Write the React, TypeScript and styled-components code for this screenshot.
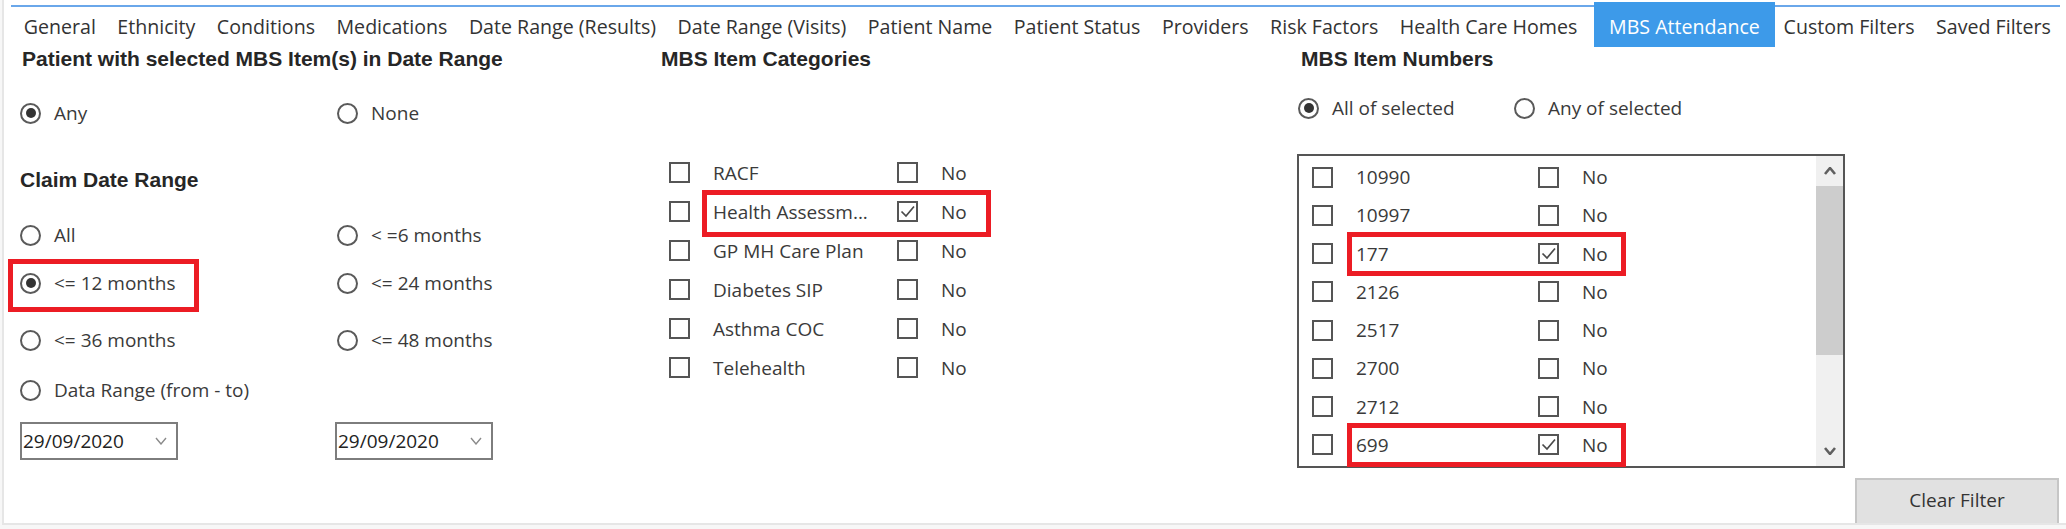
import React from 'react';
import styled, { createGlobalStyle } from 'styled-components';

const GlobalStyle = createGlobalStyle`
  html, body { margin: 0; padding: 0; background: #ffffff; }
  body { font-family: "Open Sans", "Noto Sans", sans-serif; color: #3a3a3a; }
  *, *::before, *::after { box-sizing: border-box; }
`;

const Page = styled.div`
  width: 2066px;
  height: 529px;
  overflow: hidden;
  background: #f7f7f7;
`;

const Panel = styled.div`
  margin-left: 2px;
  width: 2064px;
  height: 525px;
  background: #ffffff;
  border-left: 2px solid #e6e6e6;
  border-bottom: 2px solid #e6e6e6;
  overflow: hidden;
  display: flex;
  flex-direction: column;
`;

const TabStrip = styled.div`
  margin: 5px 6px 0 7px;
  border-top: 2px solid #6aa7ea;
  height: 42px;
  display: flex;
  padding-left: 2px;
`;

const Tab = styled.div<{ $active?: boolean }>`
  height: ${(p) => (p.$active ? 45 : 40)}px;
  margin-top: ${(p) => (p.$active ? -5 : 0)}px;
  padding: ${(p) => (p.$active ? '5px 15px 0 15px' : '0 10.75px')};
  margin-left: ${(p) => (p.$active ? 6 : 0)}px;
  margin-right: ${(p) => (p.$active ? -2 : 0)}px;
  line-height: 40px;
  font-size: 19.6px;
  white-space: nowrap;
  color: ${(p) => (p.$active ? '#ffffff' : '#333333')};
  background: ${(p) => (p.$active ? '#3d9ae9' : 'transparent')};
`;

const Content = styled.div`
  flex: 1;
  display: flex;
  padding-left: 16px;
`;

const Column = styled.div<{ $width?: number }>`
  display: flex;
  flex-direction: column;
  ${(p) => (p.$width ? `width: ${p.$width}px;` : 'flex: 1; padding-right: 5px;')}
`;

const Heading = styled.div<{ $indent?: number; $mt?: number }>`
  font-family: "Liberation Sans", Arial, sans-serif;
  font-weight: bold;
  font-size: 21px;
  line-height: 24px;
  height: 24px;
  color: #262626;
  margin-left: ${(p) => p.$indent ?? 0}px;
  margin-top: ${(p) => p.$mt ?? 0}px;
  white-space: nowrap;
`;

const OptionRow = styled.div<{ $mt: number; $col: number; $indent?: number }>`
  display: grid;
  grid-template-columns: ${(p) => p.$col}px auto;
  align-items: center;
  height: 24px;
  margin-top: ${(p) => p.$mt}px;
  padding-left: ${(p) => p.$indent ?? 0}px;
`;

const Option = styled.label<{ $hl?: boolean }>`
  position: relative;
  display: inline-flex;
  align-items: center;
  gap: 13px;
  font-size: 19px;
  line-height: 24px;
  color: #3a3a3a;
  white-space: nowrap;
  justify-self: start;
  &::after {
    content: '';
    display: ${(p) => (p.$hl ? 'block' : 'none')};
    position: absolute;
    left: -12px;
    right: -24px;
    top: -12px;
    bottom: -17px;
    border: 5px solid #ec1c24;
    pointer-events: none;
  }
`;

const RadioCircle = styled.span<{ $checked?: boolean }>`
  width: 21px;
  height: 21px;
  border-radius: 50%;
  border: 2px solid #5a5a5a;
  background: #ffffff;
  display: grid;
  place-items: center;
  flex-shrink: 0;
  &::after {
    content: '';
    display: ${(p) => (p.$checked ? 'block' : 'none')};
    width: 10px;
    height: 10px;
    border-radius: 50%;
    background: #333333;
  }
`;

const PickerRow = styled.div`
  display: grid;
  grid-template-columns: 315px auto;
  margin-top: 20px;
`;

const DatePicker = styled.div`
  width: 158px;
  height: 38px;
  border: 2px solid #7d7d7d;
  display: flex;
  align-items: center;
  justify-content: space-between;
  padding: 0 9px 0 1px;
  font-size: 19px;
  color: #222222;
  background: #ffffff;
`;

const CheckList = styled.div<{ $mt: number }>`
  display: flex;
  flex-direction: column;
  margin-top: ${(p) => p.$mt}px;
`;

const CheckRow = styled.div<{ $h: number; $pl: number }>`
  display: flex;
  align-items: center;
  height: ${(p) => p.$h}px;
  padding-left: ${(p) => p.$pl}px;
`;

const Box = styled.span`
  width: 21px;
  height: 21px;
  border: 2px solid #555555;
  background: #ffffff;
  flex-shrink: 0;
  display: grid;
  place-items: center;
  margin-right: 23px;
`;

const Pair = styled.div<{ $hl?: boolean; $l: number; $r: number; $t: number; $b: number }>`
  position: relative;
  display: flex;
  align-items: center;
  height: 100%;
  &::after {
    content: '';
    display: ${(p) => (p.$hl ? 'block' : 'none')};
    position: absolute;
    left: ${(p) => p.$l}px;
    right: ${(p) => p.$r}px;
    top: ${(p) => p.$t}px;
    bottom: ${(p) => p.$b}px;
    border: 5px solid #ec1c24;
    pointer-events: none;
  }
`;

const ItemText = styled.span<{ $w: number }>`
  width: ${(p) => p.$w}px;
  font-size: 19px;
  line-height: 24px;
  color: #3a3a3a;
  white-space: nowrap;
`;

const NoText = styled.span`
  font-size: 19px;
  line-height: 24px;
  color: #3a3a3a;
`;

const ListBox = styled.div`
  margin-top: 34px;
  width: 548px;
  height: 314px;
  border: 2px solid #555555;
  display: flex;
  background: #ffffff;
`;

const ListRows = styled.div`
  flex: 1;
  padding-top: 2px;
  display: flex;
  flex-direction: column;
`;

const ScrollBar = styled.div`
  width: 27px;
  background: #f0f0f0;
  display: flex;
  flex-direction: column;
`;

const ScrollArrow = styled.div<{ $h: number }>`
  height: ${(p) => p.$h}px;
  display: grid;
  place-items: center;
`;

const ScrollThumb = styled.div`
  height: 169px;
  background: #cdcdcd;
`;

const ScrollTrack = styled.div`
  flex: 1;
`;

const ClearButton = styled.button`
  align-self: flex-end;
  margin-top: 10px;
  margin-right: 2px;
  width: 204px;
  height: 46px;
  background: #e1e1e1;
  border: 2px solid #c6c6c6;
  border-bottom: none;
  font-family: "Open Sans", "Noto Sans", sans-serif;
  font-size: 19px;
  color: #333333;
  padding: 0 0 4px 0;
`;

const Check = () => (
  <svg width="17" height="17" viewBox="0 0 17 17">
    <polyline points="2.5,8.5 7,13 15,3.5" fill="none" stroke="#4a4a4a" strokeWidth="1.7" />
  </svg>
);

const Chevron = ({ up, color = '#8a8a8a', w = 12, sw = 1.4 }: { up?: boolean; color?: string; w?: number; sw?: number }) => (
  <svg width={w} height={w / 2 + 2} viewBox={`0 0 ${w} ${w / 2 + 2}`}>
    <polyline
      points={up ? `1,${w / 2 + 1} ${w / 2},1 ${w - 1},${w / 2 + 1}` : `1,1 ${w / 2},${w / 2 + 1} ${w - 1},1`}
      fill="none"
      stroke={color}
      strokeWidth={sw}
    />
  </svg>
);

const tabs = [
  'General',
  'Ethnicity',
  'Conditions',
  'Medications',
  'Date Range (Results)',
  'Date Range (Visits)',
  'Patient Name',
  'Patient Status',
  'Providers',
  'Risk Factors',
  'Health Care Homes',
  'MBS Attendance',
  'Custom Filters',
  'Saved Filters',
];

const categories = [
  { name: 'RACF', checked: false },
  { name: 'Health Assessm...', checked: true },
  { name: 'GP MH Care Plan', checked: false },
  { name: 'Diabetes SIP', checked: false },
  { name: 'Asthma COC', checked: false },
  { name: 'Telehealth', checked: false },
];

const numbers = [
  { n: '10990', checked: false },
  { n: '10997', checked: false },
  { n: '177', checked: true },
  { n: '2126', checked: false },
  { n: '2517', checked: false },
  { n: '2700', checked: false },
  { n: '2712', checked: false },
  { n: '699', checked: true },
];

const Radio = ({ label, checked, hl }: { label: string; checked?: boolean; hl?: boolean }) => (
  <Option $hl={hl}>
    <RadioCircle $checked={checked} />
    {label}
  </Option>
);

export default function App() {
  return (
    <>
      <GlobalStyle />
      <Page>
        <Panel>
          <TabStrip>
            {tabs.map((t) => (
              <Tab key={t} $active={t === 'MBS Attendance'}>
                {t}
              </Tab>
            ))}
          </TabStrip>
          <Content>
            <Column $width={641}>
              <Heading $indent={2}>Patient with selected MBS Item(s) in Date Range</Heading>
              <OptionRow $mt={30} $col={317}>
                <Radio label="Any" checked />
                <Radio label="None" />
              </OptionRow>
              <Heading $mt={43}>Claim Date Range</Heading>
              <OptionRow $mt={31} $col={317}>
                <Radio label="All" />
                <Radio label="< =6 months" />
              </OptionRow>
              <OptionRow $mt={24} $col={317}>
                <Radio label="<= 12 months" checked hl />
                <Radio label="<= 24 months" />
              </OptionRow>
              <OptionRow $mt={33} $col={317}>
                <Radio label="<= 36 months" />
                <Radio label="<= 48 months" />
              </OptionRow>
              <OptionRow $mt={26} $col={317}>
                <Radio label="Data Range (from - to)" />
              </OptionRow>
              <PickerRow>
                <DatePicker>
                  29/09/2020
                  <Chevron />
                </DatePicker>
                <DatePicker>
                  29/09/2020
                  <Chevron />
                </DatePicker>
              </PickerRow>
            </Column>

            <Column $width={636}>
              <Heading>MBS Item Categories</Heading>
              <CheckList $mt={82}>
                {categories.map((c) => (
                  <CheckRow key={c.name} $h={39} $pl={8}>
                    <Box />
                    <Pair $hl={c.checked} $l={-11} $r={-24} $t={-2} $b={-6}>
                      <ItemText $w={184}>{c.name}</ItemText>
                      <Box>{c.checked && <Check />}</Box>
                      <NoText>No</NoText>
                    </Pair>
                  </CheckRow>
                ))}
              </CheckList>
            </Column>

            <Column>
              <Heading $indent={4}>MBS Item Numbers</Heading>
              <OptionRow $mt={25} $col={216} $indent={1}>
                <Radio label="All of selected" checked />
                <Radio label="Any of selected" />
              </OptionRow>
              <ListBox>
                <ListRows>
                  {numbers.map((r) => (
                    <CheckRow key={r.n} $h={38.25} $pl={13}>
                      <Box />
                      <Pair $hl={r.checked} $l={-9} $r={-18} $t={-3} $b={-3}>
                        <ItemText $w={182}>{r.n}</ItemText>
                        <Box>{r.checked && <Check />}</Box>
                        <NoText>No</NoText>
                      </Pair>
                    </CheckRow>
                  ))}
                </ListRows>
                <ScrollBar>
                  <ScrollArrow $h={30}>
                    <Chevron up color="#606060" w={12} sw={2.6} />
                  </ScrollArrow>
                  <ScrollThumb />
                  <ScrollTrack />
                  <ScrollArrow $h={30}>
                    <Chevron color="#606060" w={12} sw={2.6} />
                  </ScrollArrow>
                </ScrollBar>
              </ListBox>
              <ClearButton>Clear Filter</ClearButton>
            </Column>
          </Content>
        </Panel>
      </Page>
    </>
  );
}
